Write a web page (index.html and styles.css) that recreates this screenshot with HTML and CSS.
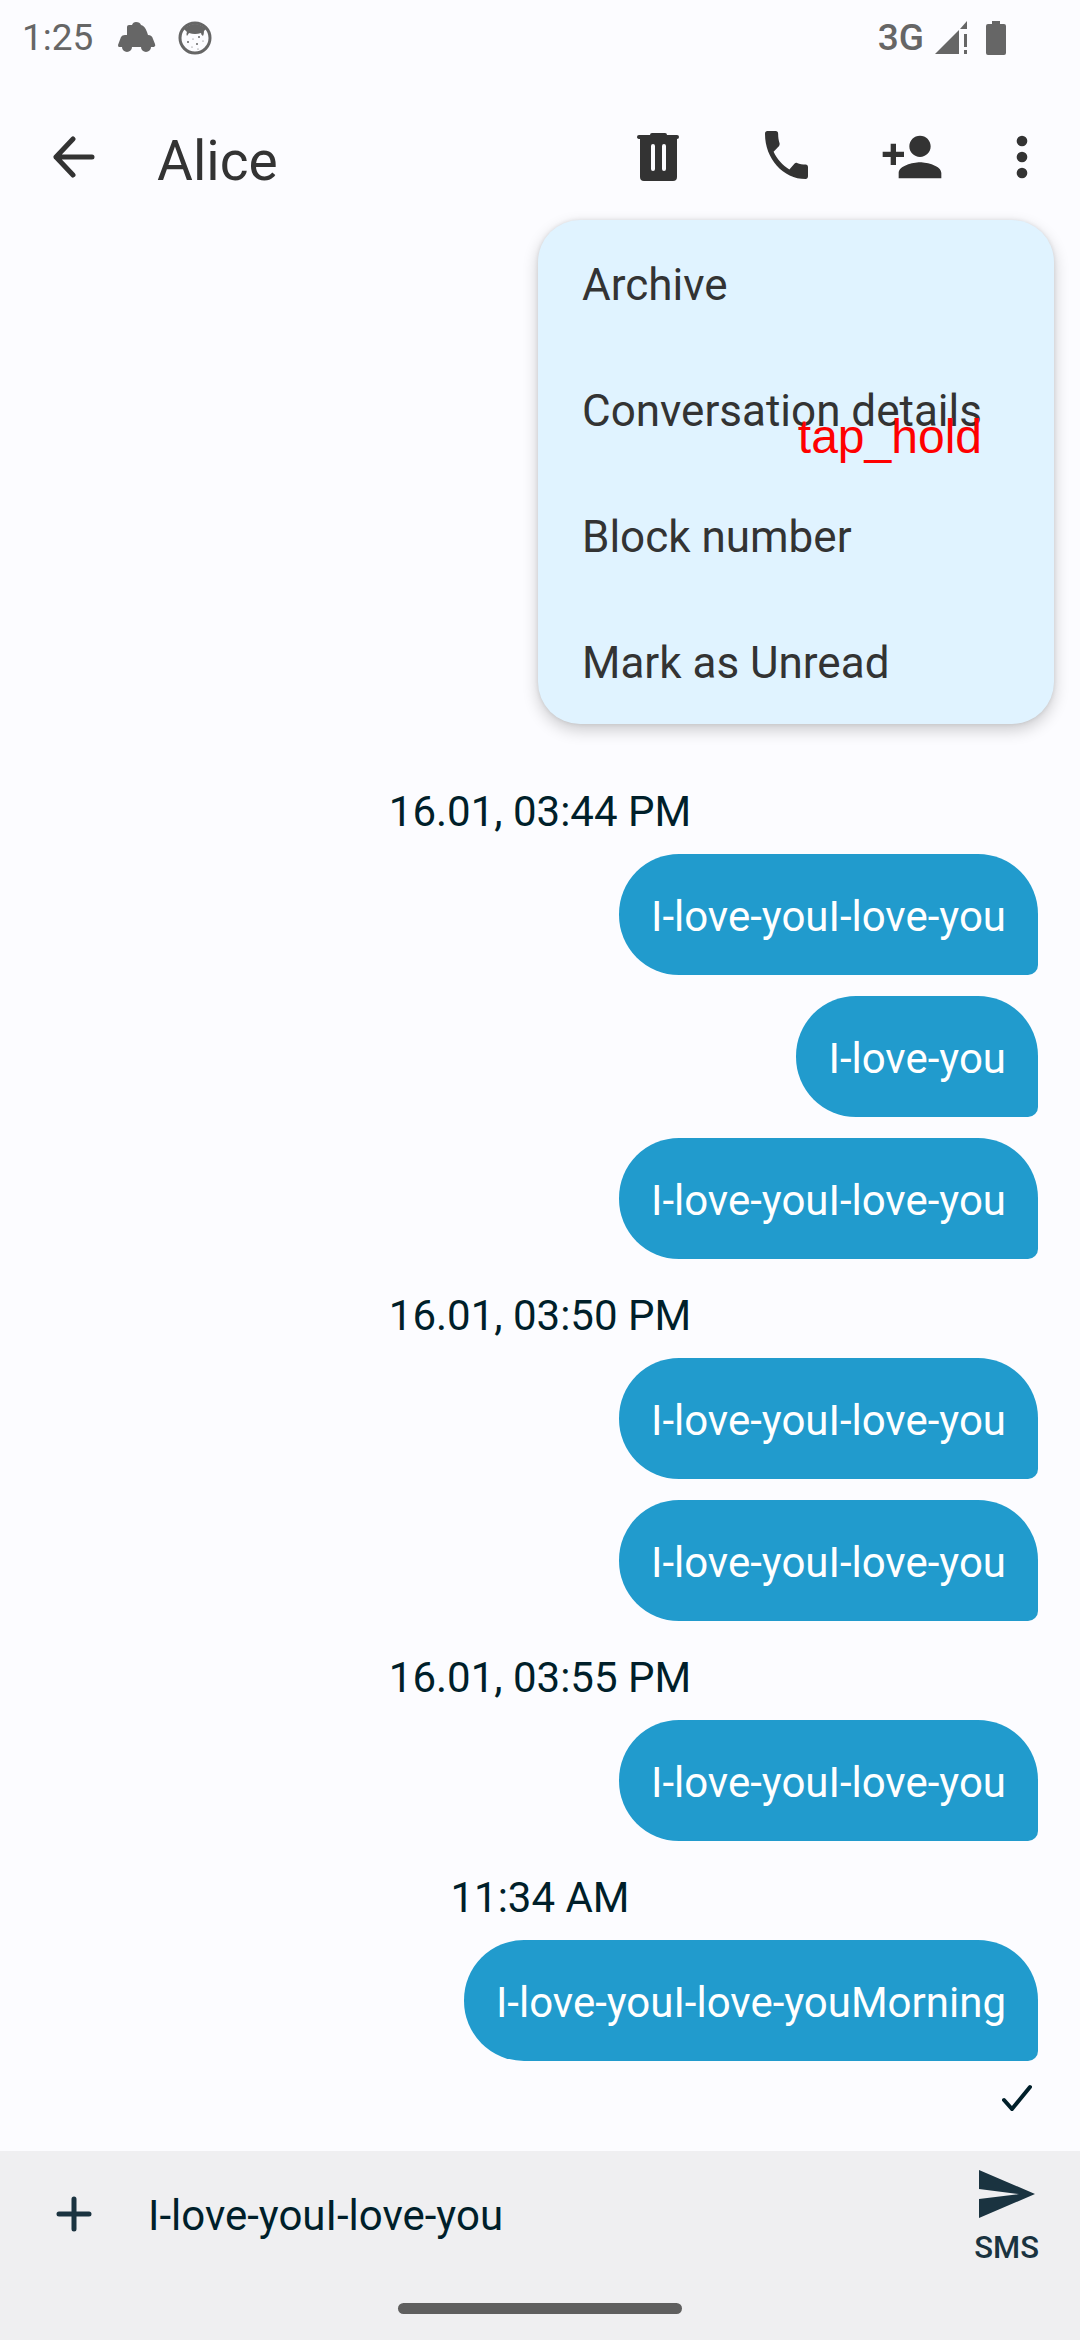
FILE: index.html
```html
<!DOCTYPE html>
<html lang="en">
<head>
<meta charset="utf-8">
<meta name="viewport" content="width=device-width, initial-scale=1">
<title>Alice</title>
<link rel="stylesheet" href="styles.css">
</head>
<body>
<div class="screen">
  <div class="status">
    <span class="clock">1:25</span>
    <svg class="taxi" width="38" height="32" viewBox="0 0 38 32" aria-hidden="true"><path d="M9 5 Q9 3 11 3 H14 Q15 0 18 0 Q22 0 23 3 Q27 4 29 10 L30 13 Q34 13 35 17 L37 22 Q38 24 36 25 H33 A5 5 0 0 1 23 25 H14 A5 5 0 0 1 4 25 H1 Q0 25 0 23 L3 15 Q4 13 7 13 H9Z"/></svg>
    <svg class="face" width="34" height="34" viewBox="0 0 34 34" aria-hidden="true"><circle cx="17" cy="17" r="15" fill="none" stroke="#666" stroke-width="3"/><path d="M6 8 Q17 -2 28 8 L26 10 Q26 13 25 15 Q23 14 23 12 Q17 14 11 12 L9 15 Q8 13 9 11Z"/><g><circle cx="10" cy="21" r="1"/><circle cx="15" cy="18" r=".6"/><circle cx="21" cy="16" r="1"/><circle cx="19" cy="23" r="1"/><circle cx="25" cy="20" r=".6"/><circle cx="14" cy="26" r=".6"/><circle cx="20" cy="28" r=".6"/></g></svg>
    <span class="network">3G</span>
    <svg class="signal" width="34" height="34" viewBox="0 0 34 34" aria-hidden="true"><path d="M1 33 L25 9 V33Z M26 8 L33 0 V8Z M30 13 H33 V26 H30Z M30 29 H33 V33 H30Z"/></svg>
    <svg class="battery" width="20" height="34" viewBox="0 0 20 34" aria-hidden="true"><path d="M6 0 H14 V3 H18 Q20 3 20 5 V32 Q20 34 18 34 H2 Q0 34 0 32 V5 Q0 3 2 3 H6Z"/></svg>
  </div>

  <header class="topbar">
    <button class="icon-button back" aria-label="Back"><svg width="42" height="42" viewBox="0 0 42 42"><path d="M39 21 H3 M20 3 L3 21 L20 39" fill="none" stroke="#333" stroke-width="5" stroke-linecap="round" stroke-linejoin="round"/></svg></button>
    <h1 class="title">Alice</h1>
    <button class="icon-button" aria-label="Delete"><svg width="46" height="48" viewBox="0 0 46 48"><path fill-rule="evenodd" d="M13 2 Q13 0 15 0 H28 Q30 0 30 2 H40 Q42 2 42 4 Q42 6 40 6 V44 Q40 48 36 48 H7 Q3 48 3 44 V6 Q0 6 0 4 Q0 2 2 2Z M16 11 Q14 11 14 13 V36 Q14 38 16 38 Q18 38 18 36 V13 Q18 11 16 11Z M27 11 Q25 11 25 13 V36 Q25 38 27 38 Q29 38 29 36 V13 Q29 11 27 11Z"/></svg></button>
    <button class="icon-button" aria-label="Call"><svg class="phone" width="43" height="52" viewBox="3 3 18 19.500" preserveAspectRatio="none"><path d="M6.6 10.8c1.4 2.8 3.8 5.1 6.6 6.6l2.2-2.2c.3-.3.7-.4 1-.2 1.1.4 2.3.6 3.6.6.6 0 1 .4 1 1V20c0 .6-.4 1-1 1C10.600 21 3 13.400 3 4c0-.6.4-1 1-1h3.500c.6 0 1 .4 1 1 0 1.300.2 2.500.6 3.600.1.300 0 .7-.2 1z"/></svg></button>
    <button class="icon-button" aria-label="Add person"><svg width="64" height="64" viewBox="0 0 24 24"><path d="M15 12c2.210 0 4-1.790 4-4s-1.790-4-4-4-4 1.790-4 4 1.790 4 4 4zm-9-2V7H4v3H1v2h3v3h2v-3h3v-2H6zm9 4c-2.670 0-8 1.340-8 4v2h16v-2c0-2.660-5.330-4-8-4z"/></svg></button>
    <button class="icon-button more" aria-label="More options"><svg width="64" height="64" viewBox="0 0 24 24"><circle cx="12" cy="6" r="2"/><circle cx="12" cy="12" r="2"/><circle cx="12" cy="18" r="2"/></svg></button>
    <div class="menu" role="menu">
      <button class="menu-item" role="menuitem">Archive</button>
      <button class="menu-item" role="menuitem">Conversation details</button>
      <button class="menu-item" role="menuitem">Block number</button>
      <button class="menu-item" role="menuitem">Mark as Unread</button>
      <span class="gesture">tap_hold</span>
    </div>
  </header>

  <main class="thread">
    <p class="date">16.01, 03:44 PM</p>
    <div class="group">
      <p class="bubble">I-love-youI-love-you</p>
      <p class="bubble">I-love-you</p>
      <p class="bubble">I-love-youI-love-you</p>
    </div>
    <p class="date">16.01, 03:50 PM</p>
    <div class="group">
      <p class="bubble">I-love-youI-love-you</p>
      <p class="bubble">I-love-youI-love-you</p>
    </div>
    <p class="date">16.01, 03:55 PM</p>
    <div class="group">
      <p class="bubble">I-love-youI-love-you</p>
    </div>
    <p class="date">11:34 AM</p>
    <div class="group">
      <p class="bubble">I-love-youI-love-youMorning</p>
    </div>
    <svg class="sent" width="30" height="28" viewBox="0 0 30 28" role="img" aria-label="Sent"><path d="M2 17 L10 26 L28 4" fill="none" stroke="#001f2a" stroke-width="4" stroke-linecap="round"/></svg>
  </main>

  <footer class="composer">
    <form class="compose-row">
      <button class="attach" type="button" aria-label="Add attachment"><svg width="36" height="36" viewBox="0 0 36 36"><path d="M18 3 V33 M3 18 H33" stroke="#1a3340" stroke-width="5" stroke-linecap="round"/></svg></button>
      <input class="message" type="text" aria-label="Message" value="I-love-youI-love-you">
      <button class="send" type="button"><svg width="56" height="48" viewBox="0 0 56 48" aria-hidden="true"><path d="M0 0 L56 24 L0 48 V29 L40 24 L0 19Z"/></svg>SMS</button>
    </form>
    <div class="home"></div>
  </footer>
</div>
</body>
</html>
```
FILE: styles.css
```css
* {
  box-sizing: border-box;
}

body {
  margin: 0;
  background: #fcfcff;
  color: #333;
  font-family: Roboto, "Noto Sans", sans-serif;
}

button,
input {
  margin: 0;
  padding: 0;
  border: 0;
  background: none;
  color: inherit;
  font: inherit;
}

svg {
  display: block;
  flex: none;
}

.screen {
  display: flex;
  flex-direction: column;
  min-height: 100vh;
}

.status {
  display: flex;
  align-items: center;
  height: 76px;
  padding: 0 74px 0 22px;
  color: #666;
  fill: #666;
  font-size: 37px;
  line-height: 46px;
}

.taxi {
  margin-left: 25px;
}

.face {
  margin-left: 22px;
}

.network {
  margin-left: auto;
  font-weight: 500;
}

.signal {
  margin-left: 10px;
}

.battery {
  margin-left: 18px;
}

.topbar {
  position: relative;
  display: flex;
  align-items: center;
  height: 162px;
  padding: 0 11px;
  fill: #333;
}

.icon-button {
  display: flex;
  align-items: center;
  justify-content: center;
  width: 126px;
  height: 126px;
}

.more {
  width: 94px;
}

.title {
  flex: 1;
  margin: 0;
  padding: 8px 0 0 20px;
  font-size: 55px;
  font-weight: 400;
  line-height: 64px;
}

.menu {
  position: absolute;
  top: 144px;
  right: 26px;
  z-index: 1;
  display: flex;
  flex-direction: column;
  width: 516px;
  border-radius: 42px;
  background: #e0f3ff;
  box-shadow: 0 6px 16px rgba(0, 0, 0, 0.2), 0 0 4px rgba(0, 0, 0, 0.1);
}

.menu-item {
  height: 126px;
  padding: 4px 44px 0;
  font-size: 44px;
  line-height: 50px;
  text-align: left;
}

.gesture {
  position: absolute;
  top: 190px;
  right: 72px;
  color: #f00;
  font-family: "Liberation Sans", Arial, sans-serif;
  font-size: 48px;
  line-height: 54px;
}

.thread {
  display: flex;
  flex: 1;
  flex-direction: column;
  justify-content: flex-end;
  padding: 0 42px 40px;
  font-size: 42px;
  line-height: 50px;
}

.date {
  margin: 0;
  padding: 32px 0 17px;
  color: #001f2a;
  text-align: center;
}

.group {
  display: flex;
  flex-direction: column;
  align-items: flex-end;
  gap: 21px;
}

.bubble {
  margin: 0;
  padding: 38px 32px 33px;
  border-radius: 60px 60px 10px 60px;
  background: #219bcd;
  color: #fff;
}

.sent {
  align-self: flex-end;
  margin: 22px 6px 0 0;
}

.composer {
  background: #efeff1;
}

.compose-row {
  display: flex;
  height: 152px;
  padding: 0 41px 0 56px;
  color: #1a3340;
  fill: #1a3340;
}

.attach {
  height: 126px;
}

.message {
  flex: 1;
  min-width: 0;
  height: 128px;
  padding: 0 56px;
  color: #001f2a;
  font-size: 42px;
}

.send {
  display: flex;
  flex-direction: column;
  align-items: center;
  gap: 11px;
  padding-top: 19px;
  font-size: 31px;
  font-weight: 500;
  line-height: 38px;
}

.home {
  width: 284px;
  height: 11px;
  margin: 0 auto 26px;
  border-radius: 6px;
  background: #5f5f5f;
}
```
